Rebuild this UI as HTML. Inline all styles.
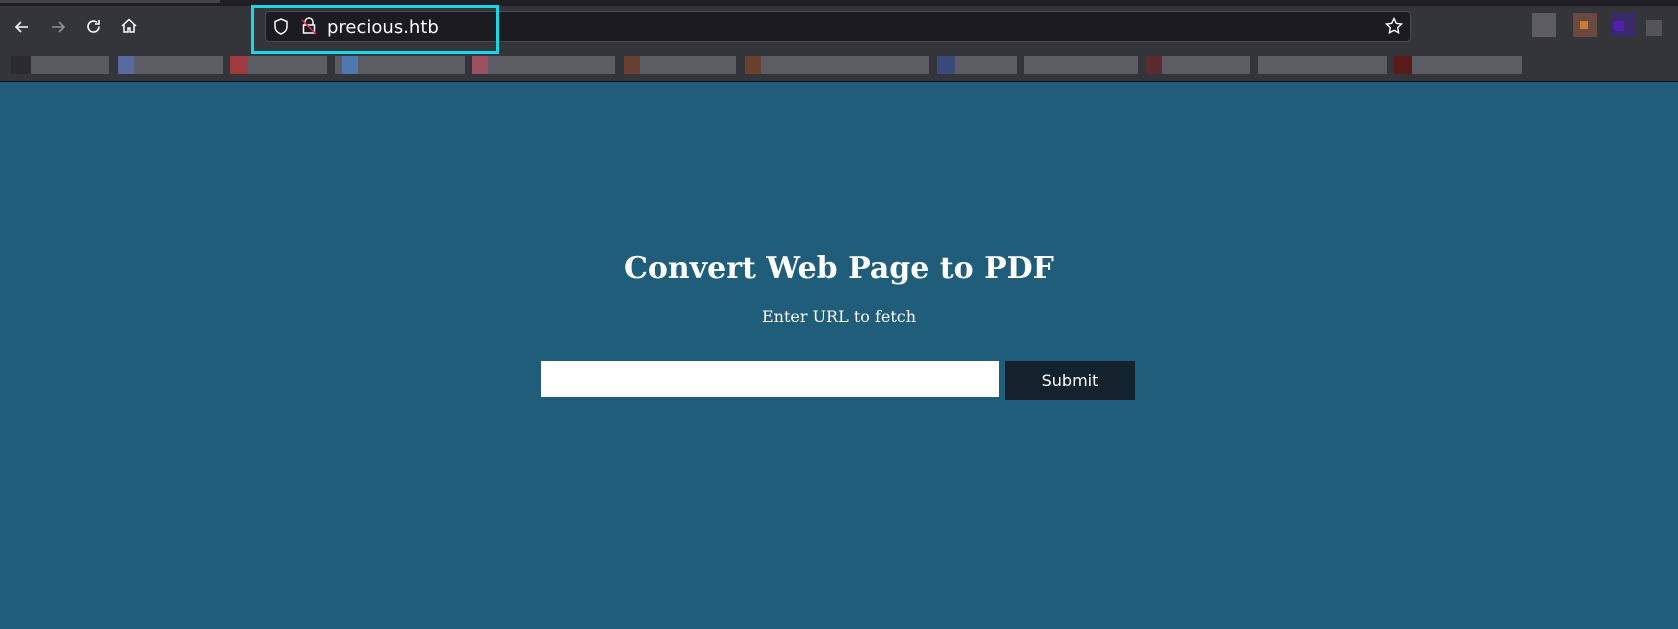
<!DOCTYPE html>
<html><head><style>
*{margin:0;padding:0;box-sizing:border-box}
body{width:1678px;height:629px;overflow:hidden;background:#1f5d7b;font-family:"Liberation Sans",sans-serif;position:relative}
#top{position:absolute;left:0;top:0;width:1678px;height:82px;background:#34353b;border-bottom:1px solid #111}
#strip{position:absolute;left:0;top:0;width:1678px;height:6px;background:#1f1e24}
#tab{position:absolute;left:0;top:0;width:220px;height:3px;background:#42414d}
#url{position:absolute;left:265px;top:11px;width:1146px;height:31px;background:#1c1b22;border:1px solid #4a4a55;border-radius:4px}
#hl{position:absolute;left:251px;top:5px;width:248px;height:49px;border:3px solid #19d6e6}
#urltext{position:absolute;left:327px;top:17px;color:#fbfbfe;font-family:"DejaVu Sans",sans-serif;font-size:18px}
.ic{position:absolute}
.bm{position:absolute;top:56px;height:18px}
h1{position:absolute;left:0;width:1678px;top:251px;text-align:center;color:#fff;font-family:"DejaVu Serif",serif;font-weight:bold;font-size:30px}
#sub{position:absolute;left:0;width:1678px;top:307px;text-align:center;color:#fff;font-family:"DejaVu Serif",serif;font-size:16px}
#inp{position:absolute;left:541px;top:361px;width:458px;height:36px;background:#fff}
#btn{position:absolute;left:1005px;top:361px;width:130px;height:39px;background:#13222d;color:#fff;font-family:"DejaVu Sans",sans-serif;font-size:16px;text-align:center;line-height:39px}
</style></head><body>
<div id="top">
<div id="strip"></div><div id="tab"></div>
<svg class="ic" style="left:12px;top:17px" width="20" height="20" viewBox="0 0 20 20" fill="none" stroke="#fbfbfe" stroke-width="1.6"><path d="M16 10H4M9 5l-5 5 5 5"/></svg>
<svg class="ic" style="left:48px;top:17px" width="20" height="20" viewBox="0 0 20 20" fill="none" stroke="#8f8f9d" stroke-width="1.6"><path d="M4 10h12M11 5l5 5-5 5"/></svg>
<svg class="ic" style="left:84px;top:17px" width="20" height="20" viewBox="0 0 20 20" fill="none" stroke="#fbfbfe" stroke-width="1.6"><path d="M15 9.5A5.5 5.5 0 1 1 13 5.3"/><path d="M15 3v4h-4" /></svg>
<svg class="ic" style="left:119px;top:16px" width="20" height="20" viewBox="0 0 20 20" fill="none" stroke="#fbfbfe" stroke-width="1.5"><path d="M3 10l7-6.5 7 6.5M5 8.5V16h4v-4h2v4h4V8.5"/></svg>
<div id="url"></div>
<svg class="ic" style="left:272px;top:17px" width="18" height="19" viewBox="0 0 18 19" fill="none" stroke="#fbfbfe" stroke-width="1.5"><path d="M9 2l6 2.5v5c0 4-3 6.5-6 7.5-3-1-6-3.5-6-7.5v-5z"/></svg>
<svg class="ic" style="left:300px;top:16px" width="18" height="20" viewBox="0 0 18 20" fill="none" stroke-width="1.5"><path stroke="#fbfbfe" d="M5 9V6a4 4 0 0 1 8 0v3M3.5 9h11v8h-11z"/><path stroke="#e22850" d="M2 4l14 14"/></svg>
<div id="urltext">precious.htb</div>
<svg class="ic" style="left:1384px;top:16px" width="20" height="20" viewBox="0 0 20 20" fill="none" stroke="#fbfbfe" stroke-width="1.4"><path d="M10 2.5l2.3 4.8 5.2.7-3.8 3.6.9 5.2L10 14.3l-4.6 2.5.9-5.2L2.5 8l5.2-.7z"/></svg>
<div id="hl"></div>
<div class="ic" style="left:1532px;top:13px;width:24px;height:24px;background:#5c5c62"></div>
<div class="ic" style="left:1573px;top:13px;width:24px;height:24px;background:#6a4a40"></div>
<div class="ic" style="left:1580px;top:21px;width:8px;height:8px;background:#c87a38"></div>
<div class="ic" style="left:1612px;top:13px;width:24px;height:24px;background:#3a2a6a"></div>
<div class="ic" style="left:1614px;top:21px;width:10px;height:10px;background:#5020b0"></div>
<div class="ic" style="left:1646px;top:20px;width:16px;height:16px;background:#555559"></div>
<div class="bm" style="left:11px;width:98px;background:#5a5a62"></div>
<div class="bm" style="left:11px;width:20px;background:#2a2a30"></div>
<div class="bm" style="left:118px;width:105px;background:#5c5c64"></div>
<div class="bm" style="left:118px;width:16px;background:#5a6aa0"></div>
<div class="bm" style="left:230px;width:97px;background:#5c5c64"></div>
<div class="bm" style="left:230px;width:18px;background:#a03a40"></div>
<div class="bm" style="left:335px;width:130px;background:#5c5c64"></div>
<div class="bm" style="left:342px;width:16px;background:#4a7ab0"></div>
<div class="bm" style="left:472px;width:143px;background:#5c5c64"></div>
<div class="bm" style="left:472px;width:16px;background:#9a5060"></div>
<div class="bm" style="left:624px;width:112px;background:#5c5c64"></div>
<div class="bm" style="left:624px;width:16px;background:#6a4030"></div>
<div class="bm" style="left:745px;width:184px;background:#5c5c64"></div>
<div class="bm" style="left:745px;width:16px;background:#6a4030"></div>
<div class="bm" style="left:937px;width:80px;background:#5c5c64"></div>
<div class="bm" style="left:937px;width:18px;background:#3a4a7a"></div>
<div class="bm" style="left:1024px;width:114px;background:#5c5c64"></div>
<div class="bm" style="left:1146px;width:104px;background:#5c5c64"></div>
<div class="bm" style="left:1146px;width:16px;background:#5a2a30"></div>
<div class="bm" style="left:1258px;width:129px;background:#5c5c64"></div>
<div class="bm" style="left:1394px;width:128px;background:#5c5c64"></div>
<div class="bm" style="left:1394px;width:18px;background:#5a1a1a"></div>
</div>
<h1>Convert Web Page to PDF</h1>
<div id="sub">Enter URL to fetch</div>
<div id="inp"></div>
<div id="btn">Submit</div>
</body></html>
